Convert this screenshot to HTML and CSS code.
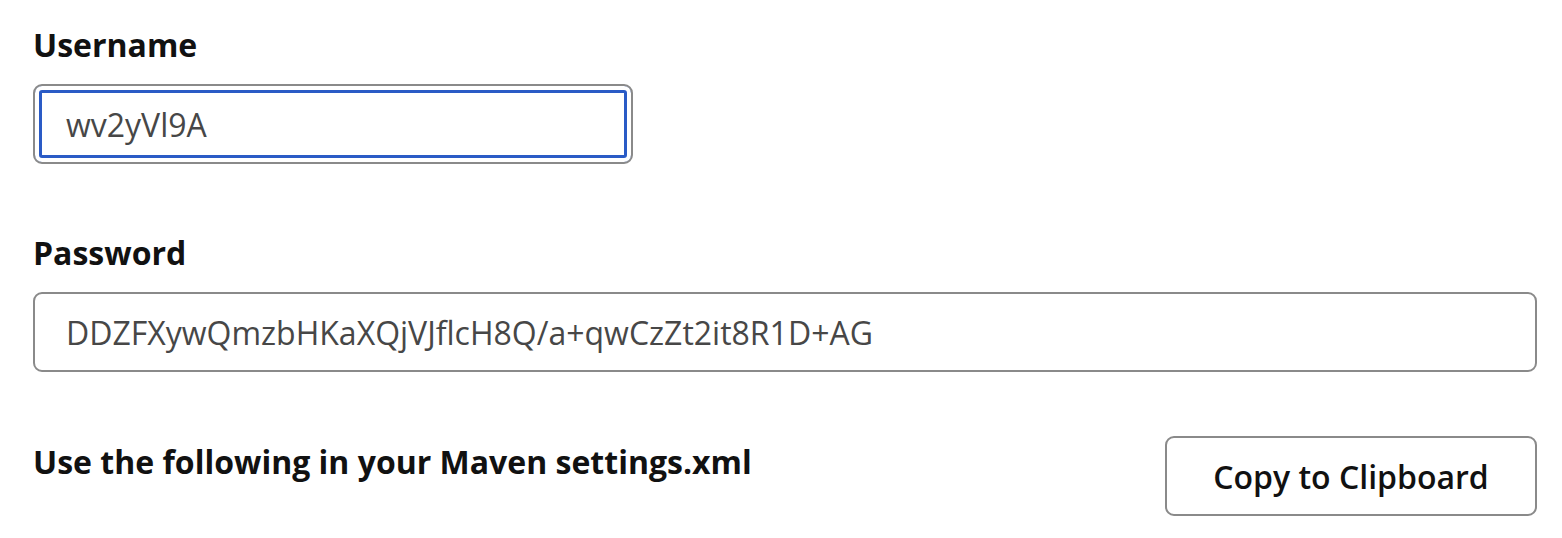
FILE: index.html
```html
<!DOCTYPE html>
<html lang="en">
<head>
<meta charset="utf-8">
<title>Maven credentials</title>
<link rel="stylesheet" href="styles.css">
</head>
<body>
<main class="form">
  <div class="field">
    <label class="label" for="username">Username</label>
    <div class="input input-short input-focus" id="username">wv2yVl9A</div>
  </div>
  <div class="field field-second">
    <label class="label" for="password">Password</label>
    <div class="input" id="password">DDZFXywQmzbHKaXQjVJflcH8Q/a+qwCzZt2it8R1D+AG</div>
  </div>
  <div class="row">
    <div class="label label-row">Use the following in your Maven settings.xml</div>
    <button class="button" type="button">Copy to Clipboard</button>
  </div>
</main>
</body>
</html>
```
FILE: styles.css
```css
html, body {
  margin: 0;
  padding: 0;
  background: #ffffff;
}
body {
  font-family: "Open Sans", "Liberation Sans", sans-serif;
  color: #111111;
}
.form {
  padding: 25px 25px 0 33px;
  display: flex;
  flex-direction: column;
}
.field {
  display: flex;
  flex-direction: column;
  gap: 19px;
}
.field-second {
  margin-top: 69px;
}
.label {
  display: block;
  font-size: 32px;
  line-height: 40px;
  font-weight: 700;
  color: #111111;
}
.input {
  box-sizing: border-box;
  height: 80px;
  border: 2px solid #8a8a8a;
  border-radius: 9px;
  padding: 0 0 0 31px;
  display: flex;
  align-items: center;
  font-size: 32px;
  color: #474747;
  background: #ffffff;
}
.input-short {
  width: 600px;
}
.input-focus {
  box-shadow: inset 0 0 0 4px #ffffff, inset 0 0 0 7px #2a5bc6;
}
.row {
  margin-top: 64px;
  display: flex;
  justify-content: space-between;
  align-items: flex-start;
}
.label-row {
  padding-top: 6px;
}
.button {
  box-sizing: border-box;
  width: 372px;
  height: 80px;
  border: 2px solid #8a8a8a;
  border-radius: 9px;
  background: #ffffff;
  font-family: "Open Sans", "Liberation Sans", sans-serif;
  font-size: 32px;
  font-weight: 600;
  color: #111111;
  padding: 0;
}
```
